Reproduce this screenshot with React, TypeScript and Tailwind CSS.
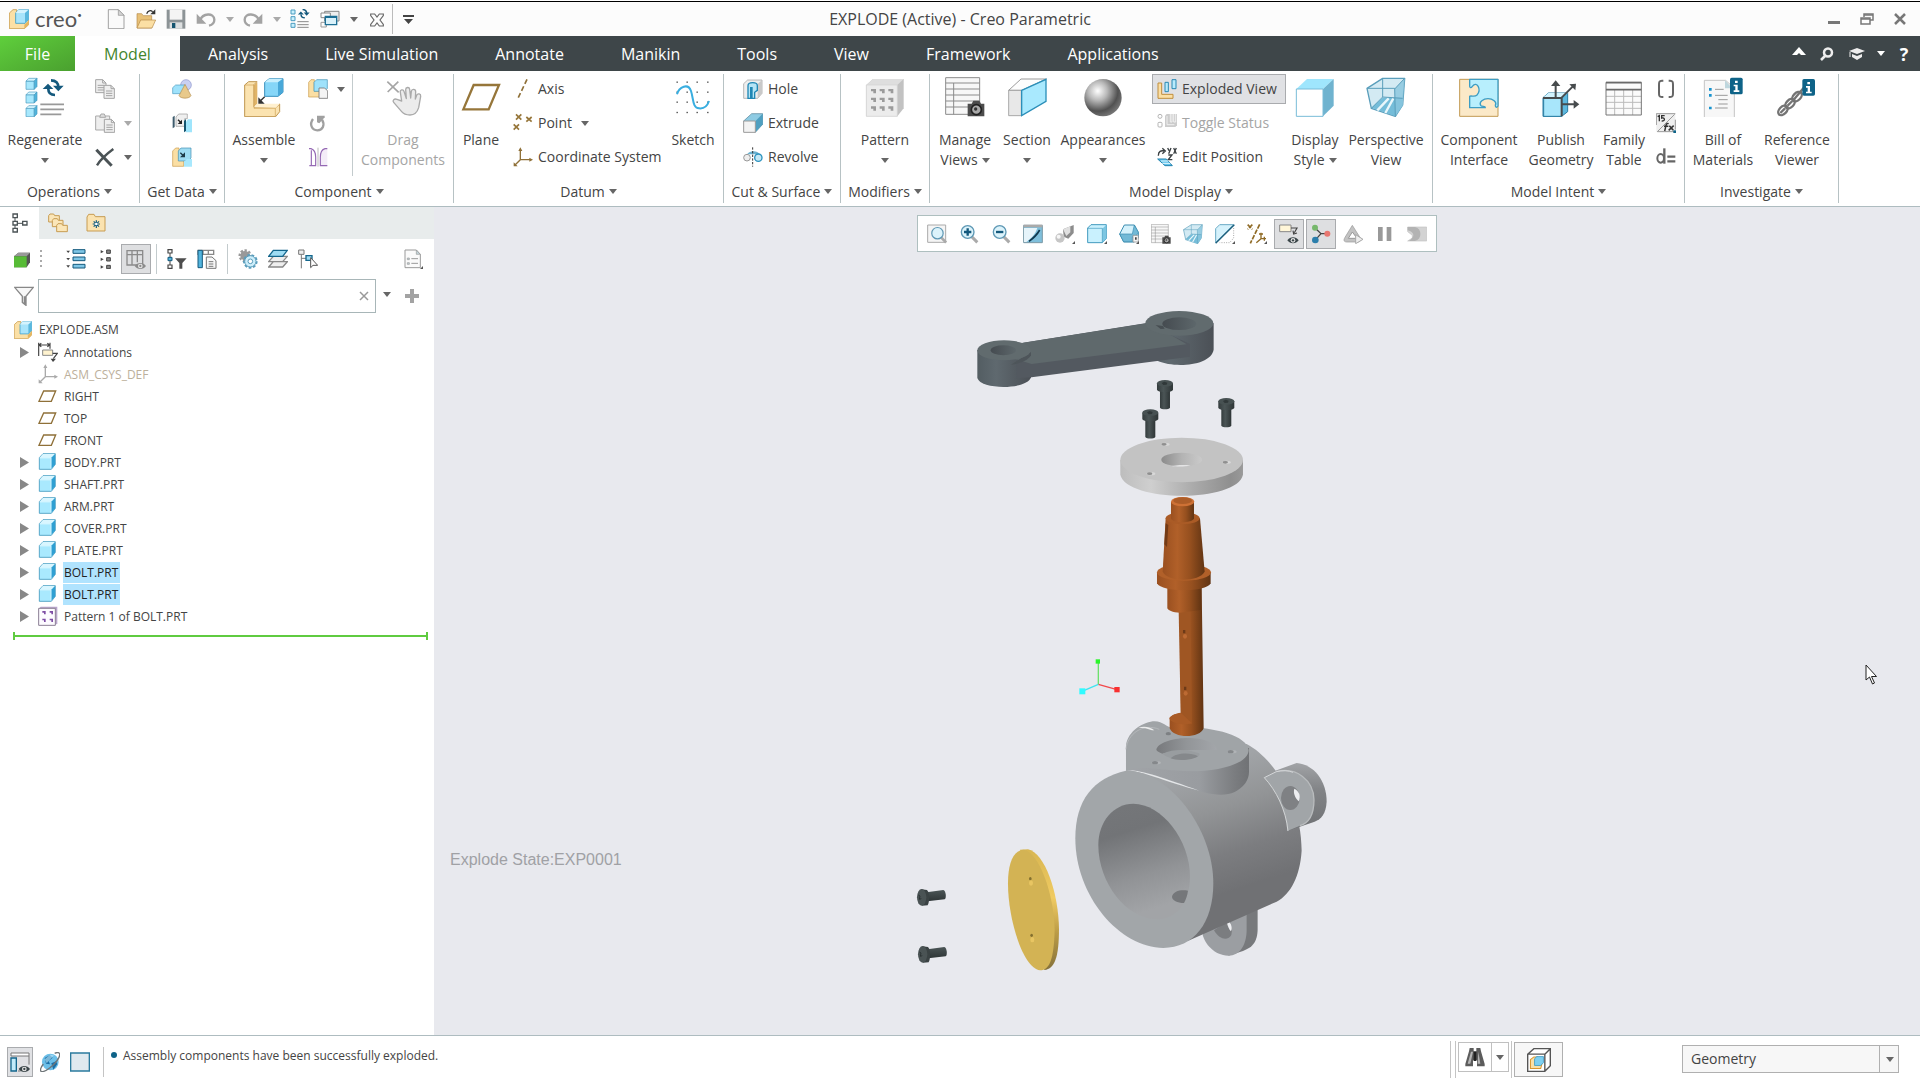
import { useState } from "react"
import type { ReactNode } from "react"
import clsx from "clsx"

// ─── Icon primitives ──────────────────────────────────────

function Small({ children, className }: { children: ReactNode; className?: string }) {
  return <svg viewBox="0 0 60 60" className={clsx("size-5 shrink-0", className)} fill="none" aria-hidden="true">{children}</svg>
}

function Large({ children }: { children: ReactNode }) {
  return <svg viewBox="0 0 120 120" className="size-10 shrink-0" fill="none" aria-hidden="true">{children}</svg>
}

function Caret({ className }: { className?: string }) {
  return (
    <svg viewBox="0 0 8 5" className={clsx("inline-block h-[5px] w-2 shrink-0", className)} aria-hidden="true">
      <path d="M0 0h8L4 5z" fill="currentColor" />
    </svg>
  )
}

interface CubeProps { x: number; y: number; s: number; front?: string; top?: string; side?: string; line?: string }

function Cube({ x, y, s, front = "#a8e8fd", top = "#d5f5ff", side = "#4fb4dc", line = "#4a9cc0" }: CubeProps) {
  const d = s * 0.25
  return (
    <g stroke={line} strokeWidth="2" strokeLinejoin="round">
      <path d={`M${x} ${y + d}h${s - d}v${s - d}h${d - s}z`} fill={front} />
      <path d={`M${x} ${y + d}l${d} ${-d}h${s - d}l${-d} ${d}z`} fill={top} />
      <path d={`M${x + s - d} ${y + d}l${d} ${-d}v${s - d}l${-d} ${d}z`} fill={side} />
    </g>
  )
}

const Swirl = () => (
  <g stroke="#14597d" strokeWidth="8">
    <path d="M100 32C101 18 92 10 78 10" />
    <path d="M70 36C70 48 76 54 90 54" />
    <path d="M84 26h32L100 43zM53 36h32L69 20z" fill="#14597d" stroke="none" />
  </g>
)

const AssemblyLogo = ({ className }: { className?: string }) => (
  <Small className={className}>
    <path d="M1 12L12 2h11l-2 33h24l14-1v13L46 59H1z" fill="#fbe0a6" stroke="#c99b4a" strokeWidth="2.5" strokeLinejoin="round" />
    <path d="M46 59V47l13-12v12z" fill="#e6b660" />
    <path d="M20 12L29 2h30v29l-11 12H20z" fill="#a8e4fb" stroke="#3f9fc8" strokeWidth="2.5" strokeLinejoin="round" />
    <path d="M20 12h28L59 2H29z" fill="#d4f3fe" />
    <path d="M48 12L59 2v29L48 43z" fill="#5ab8de" />
  </Small>
)

const PartIcon = () => (
  <Small>
    <path d="M4 17L15 5h37v32L40 52H4z" fill="#a9e9fe" stroke="#4299be" strokeWidth="2.5" strokeLinejoin="round" />
    <path d="M5 17L15 6h36L40 17z" fill="#d9f6ff" />
    <path d="M40 17L51 6v31L40 51z" fill="#2f9fd2" />
    <path d="M5 18h34v32" stroke="#e2f9ff" strokeWidth="2" />
  </Small>
)

const PlaneIcon = () => (
  <Small>
    <path d="M3 46L17 15h36L40 46z" stroke="#8f7038" strokeWidth="4" />
  </Small>
)

const CsysIcon = ({ color }: { color: string }) => (
  <Small>
    <path d="M22 8v30h30M22 38L6 54" stroke={color} strokeWidth="4" />
    <path d="M16 12l6-11 6 11zM49 32l11 6-11 6zM2 46v12h12z" fill={color} />
  </Small>
)

const ViewsTable = () => (
  <>
    <path d="M2 2h102v110H2z" fill="#f7f7f7" stroke="#8b8b8b" strokeWidth="3" />
    <path d="M2 18h102M2 36h102M2 54h102M2 72h102M2 90h80M26 18v94" stroke="#8b8b8b" strokeWidth="3" />
    <path d="M68 80h12l5-9h18l5 9h10v38H68z" fill="#4c4c4c" />
    <circle cx="94" cy="98" r="15" fill="#a9a9a9" stroke="#222" strokeWidth="5" />
    <circle cx="92" cy="96" r="5" fill="#333" />
  </>
)

const GlassBox = () => (
  <g strokeLinejoin="round">
    <path d="M3 34L50 4h66l-6 80-22 34-72-24z" fill="#d3eaf3" stroke="#5a9ebb" strokeWidth="4" />
    <path d="M16 92l34-30h60v24l-22 32z" fill="#75bdd9" />
    <path d="M34 100l34-36M58 108l24-44" stroke="#eaf7fb" strokeWidth="7" />
    <path d="M86 36L116 4l-6 80-22 34z" fill="#89c6dd" opacity=".8" />
    <path d="M3 34h83l2 84M50 4v56l-34 34M86 36l30-32M50 60l60 4" stroke="#5a9ebb" strokeWidth="3" />
  </g>
)

const Info = ({ x, y }: { x: number; y: number }) => (
  <g transform={`translate(${x} ${y})`}>
    <rect width="38" height="50" rx="5" fill="#0e6388" />
    <path d="M15 9h8v7h-8zM11 21h12v17h5v5H11v-5h5V26h-5z" fill="#fff" />
  </g>
)

const CornerMark = () => <path d="M60 51v9h-9z" fill="#555" />

const Eye = ({ x, y, color = "#3a4548" }: { x: number; y: number; color?: string }) => (
  <g transform={`translate(${x} ${y})`}>
    <path d="M0 9C8-3 26-3 34 9 26 21 8 21 0 9z" fill={color} />
    <circle cx="17" cy="9" r="7" fill="#e6e6e6" />
    <circle cx="17" cy="9" r="3.5" fill={color} />
  </g>
)

// ─── Quick access icons ───────────────────────────────────

const NewIcon = () => (
  <Small>
    <path d="M7 2h30l17 17v40H7z" fill="#fafafa" stroke="#8f8f8f" strokeWidth="2.5" />
    <path d="M37 2v17h17z" fill="#d5d5d5" stroke="#8f8f8f" strokeWidth="2" />
  </Small>
)

const OpenIcon = () => (
  <Small>
    <path d="M3 57V14h14l5 6h25v37z" fill="#e8c178" stroke="#b58a45" strokeWidth="2" />
    <path d="M3 57L14 33h45L48 57z" fill="#fbdfa4" stroke="#b58a45" strokeWidth="2" />
    <path d="M32 14C36 4 44 3 50 8" stroke="#333" strokeWidth="4" />
    <path d="M58 1v15H43z" fill="#333" />
  </Small>
)

const SaveIcon = () => (
  <Small>
    <path d="M2 2h56v57H2z" fill="#8c9396" />
    <path d="M11 2h38v30H11z" fill="#f4f4f4" />
    <path d="M11 40h38v19H11z" fill="#dcdfe0" />
    <path d="M18 42h10v15H18z" fill="#14546f" />
  </Small>
)

const UndoIcon = ({ flip }: { flip?: boolean }) => (
  <Small className={flip ? "-scale-x-100" : undefined}>
    <path d="M12 34C20 12 54 10 55 32c0 10-8 16-16 18" stroke="#a3a3a3" strokeWidth="7" />
    <path d="M2 14v30h29z" fill="#a3a3a3" />
  </Small>
)

const RegenSmall = () => (
  <Small>
    {[3, 23, 43].map(y => <path key={y} d={`M3 ${y}h12v12H3z`} fill="#c9f0fd" stroke="#4a9cc0" strokeWidth="3" />)}
    <g transform="translate(-6 -4) scale(.56)"><Swirl /></g>
    <path d="M22 38h34M22 47h34M22 55h34" stroke="#8a8a8a" strokeWidth="3" />
  </Small>
)

const WindowsIcon = () => (
  <Small>
    <path d="M14 7h43v29H14z" fill="#eee" stroke="#888" strokeWidth="3" />
    <path d="M3 12h28v14H3z" fill="#fff" stroke="#888" strokeWidth="3" />
    <path d="M3 40h16v14H3z" stroke="#999" strokeWidth="3" />
    <path d="M16 22h34v25H16z" fill="#d9f1fa" stroke="#1c6f95" strokeWidth="4" />
    <path d="M16 22h34v5H16z" fill="#1c6f95" />
  </Small>
)

const CloseBoxIcon = () => (
  <Small>
    <path d="M11 15h12l7 9 7-9h12v5L39 33l10 13v5H37l-7-9-7 9H11v-5l10-13-10-13z" stroke="#666" strokeWidth="3.500" />
  </Small>
)

// ─── Ribbon icons ─────────────────────────────────────────

const RegenerateIcon = () => (
  <Large>
    {[4, 45, 86].map(y => <Cube key={y} x={3} y={y} s={33} />)}
    <Swirl />
    <path d="M46 82h71M46 97h71M46 112h63" stroke="#999" strokeWidth="5" />
  </Large>
)

const Page = ({ x, y }: { x: number; y: number }) => (
  <g transform={`translate(${x} ${y})`} stroke="#a3a3a3" strokeWidth="3">
    <path d="M1 1h21l10 10v29H1z" fill="#efefef" />
    <path d="M22 1v10h10M7 18h19M7 25h19M7 32h19" />
  </g>
)

const CopyIcon = () => <Small><Page x={1} y={1} /><Page x={26} y={18} /></Small>

const PasteIcon = () => (
  <Small>
    <path d="M2 9h42v42H2z" fill="#eee" stroke="#a9a9a9" strokeWidth="3" />
    <path d="M14 13h18l-4-10H18z" fill="#ddd" stroke="#a9a9a9" strokeWidth="3" />
    <Page x={27} y={18} />
  </Small>
)

const DeleteIcon = () => (
  <Small>
    <path d="M4 8L50 56" stroke="#4b5356" strokeWidth="9" />
    <path d="M55 6C36 20 16 38 6 55" stroke="#4b5356" strokeWidth="7" />
  </Small>
)

const ShapesIcon = () => (
  <Small>
    <circle cx="42" cy="18" r="16" fill="#c9d0f2" stroke="#8b93cb" strokeWidth="2" />
    <path d="M2 26l9-8h28v22l-5 4H2z" fill="#9fe2fb" stroke="#4a9cc0" strokeWidth="2" />
    <path d="M39 16L57 50C52 60 26 60 21 50z" fill="#e8c98b" stroke="#b59052" strokeWidth="2" />
  </Small>
)

const CopyGeomIcon = () => (
  <Small>
    <path d="M2 12l6-4v34l-6 4z" fill="#3d5b6c" />
    <path d="M12 12L20 3h26v14h-8v23H12z" fill="#efefef" stroke="#999" strokeWidth="2" />
    <path d="M18 20l11 11" stroke="#222" strokeWidth="4" />
    <path d="M30 20v13H17z" fill="#222" />
    <path d="M36 24l6-6v36l-6 4z" fill="#14546f" />
    <path d="M42 26l6-7h12v39H42z" fill="#9fe5fc" />
  </Small>
)

const ShrinkIcon = () => (
  <Small>
    <path d="M2 12L11 3h10v33h14v22H2z" fill="#fbdfa4" stroke="#c99b4a" strokeWidth="2" />
    <path d="M19 12l8-9h30v30l-9 9H19z" fill="#9edcf2" stroke="#3f8fb3" strokeWidth="2" />
    <path d="M25 17l11 11" stroke="#1d3a48" strokeWidth="4" />
    <path d="M39 16v15H24z" fill="#1d3a48" />
    <path d="M36 44l9-8h15v23H36z" fill="#a8e8fd" />
  </Small>
)

const AssembleIcon = () => (
  <Large>
    <path d="M2 24L14 14h25l-9 9v67h66l11-9v23L95 119H2z" fill="#fbe3b0" stroke="#bf9650" strokeWidth="3" strokeLinejoin="round" />
    <path d="M30 24l10-9v65l-10 9z" fill="#e0b468" />
    <path d="M2 24h28v70h64v24M94 94l13-12" stroke="#cfa254" strokeWidth="2" />
    <path d="M30 90l10-10h67L96 92z" fill="#fff0cf" />
    <path d="M62 16L76 5h41v41L102 58H62z" fill="#86d6f8" stroke="#3990bd" strokeWidth="3" />
    <path d="M62 16h40l15-11H76z" fill="#c8effd" />
    <path d="M102 16l15-11v41l-15 12z" fill="#49a8d8" />
    <path d="M62 59L48 73" stroke="#333" strokeWidth="4" />
    <path d="M43 61v19h19z" fill="#333" />
  </Large>
)

const CreateIcon = () => (
  <Small>
    <path d="M2 10L9 2h10v34h16v18H2z" fill="#fbdfa4" stroke="#c99b4a" strokeWidth="2" />
    <path d="M18 10l8-8h32v26l-9 9H18z" fill="#9fe2fb" stroke="#3f8fb3" strokeWidth="2" />
    <path d="M33 27h17l9 9v22H33z" fill="#f4f4f4" stroke="#777" strokeWidth="2.5" />
  </Small>
)

const RepeatIcon = () => (
  <Small>
    <path d="M15 18C3 34 12 52 28 52S52 36 42 20" stroke="#a0a0a0" strokeWidth="7" />
    <path d="M27 8h23v5L34 31l-7-3z" fill="#a0a0a0" />
  </Small>
)

const MirrorIcon = () => (
  <Small>
    <path d="M3 5h6c10 3 14 14 14 26v25H4M10 10v46" stroke="#9569b4" strokeWidth="3.500" />
    <path d="M58 5h-7c-11 3-14 14-14 26v25h21" fill="#f4edf8" stroke="#9569b4" strokeWidth="3.500" />
    <path d="M30 2v57" stroke="#999" strokeWidth="2" />
  </Small>
)

const DragIcon = () => (
  <Large>
    <path d="M13 14l34 32M46 14L14 45" stroke="#a5a5a5" strokeWidth="5" />
    <path d="M56 72l-14-5c-8-3-15 3-10 9l24 28c7 9 16 10 25 10 15 0 22-9 26-22l6-34c1-8-9-10-12-3l-4 11 1-22c0-9-12-9-13-1l-2 20-3-26c-1-8-12-7-12 1l2 27-7-22c-2-7-13-5-11 3z" fill="#ececec" stroke="#aaa" strokeWidth="4" strokeLinejoin="round" />
  </Large>
)

const DatumPlaneIcon = () => (
  <Large><path d="M7 97L38 24h76L83 97z" stroke="#96763a" strokeWidth="7" /></Large>
)

const AxisIcon = () => (
  <Small><path d="M42 1L14 60" stroke="#8f7038" strokeWidth="5" strokeDasharray="15 8" /></Small>
)

const PointIcon = () => (
  <Small>
    <path d="M9 4l16 16M25 4L9 20M40 12l16 14M56 12L40 26M2 34l16 16M18 34L2 50" stroke="#96763a" strokeWidth="5" />
  </Small>
)

const SketchIcon = () => (
  <Large>
    {[15, 45, 75, 106].map(y => [12, 42, 72, 104].map(x => <rect key={`${x}-${y}`} x={x - 1.5} y={y - 1.5} width="4" height="4" fill="#444" />))}
    <path d="M12 52C18 28 46 18 54 42C62 66 58 92 78 94C94 96 104 84 108 72" stroke="#39aee0" strokeWidth="6" />
  </Large>
)

const HoleIcon = () => (
  <Small>
    <path d="M2 14L14 3h43v40L44 58H2z" fill="#eee" stroke="#999" strokeWidth="2" />
    <path d="M44 15L57 3v40L44 58z" fill="#c9c9c9" />
    <path d="M15 58V20c0-12 28-12 28 0v14l-8 6v18h-8V26h-4v32z" fill="#b5e4f5" stroke="#1f87b5" strokeWidth="4" />
  </Small>
)

const ExtrudeIcon = () => (
  <Small>
    <path d="M2 24L26 2h33v32L37 58z" fill="#8ecbe3" stroke="#4b7f95" strokeWidth="2" />
    <path d="M37 25L59 2v32L37 58z" fill="#4f9fc0" />
    <path d="M2 24h35v34H2z" fill="#f3f3f3" stroke="#999" strokeWidth="3" />
  </Small>
)

const RevolveIcon = () => (
  <Small>
    <path d="M12 22c8-12 32-12 38 0z" fill="#6db2d0" />
    <circle cx="12" cy="32" r="10" fill="#eee" stroke="#999" strokeWidth="3" />
    <circle cx="46" cy="32" r="11" fill="#c5e8f5" stroke="#2c93bf" strokeWidth="4" />
    <path d="M29 1v58" stroke="#333" strokeWidth="3" strokeDasharray="7 4" />
  </Small>
)

const PatternIcon = () => (
  <Large>
    <path d="M4 24L24 6h92v88L97 118H4z" fill="#c2c2c2" />
    <path d="M4 24L24 6h92L97 24z" fill="#dedede" />
    <path d="M4 24h93v94H4z" fill="#ececec" stroke="#d2d2d2" strokeWidth="2" />
    {[36, 62, 88].map(y => [18, 44, 70].map(x => <path key={`${x}-${y}`} d={`M${x} ${y}h15v13h-8v-6h-7z`} fill="#9b9b9b" />))}
  </Large>
)

const ManageViewsIcon = () => <Large><ViewsTable /></Large>

const SectionIcon = () => (
  <Large>
    <path d="M5 40L42 6h76L44 40z" fill="#fdfdfd" stroke="#888" strokeWidth="2.5" />
    <path d="M5 40h38v76H5z" fill="#e8e8e8" stroke="#999" strokeWidth="2.5" />
    <path d="M44 40l73-33v66l-73 43z" fill="#a9e9fe" stroke="#2b8fb9" strokeWidth="4" />
  </Large>
)

const AppearancesIcon = () => (
  <Large>
    <defs>
      <radialGradient id="sphere" cx="36%" cy="32%" r="72%">
        <stop offset="0" stopColor="#fff" />
        <stop offset=".35" stopColor="#b9b9b9" />
        <stop offset=".75" stopColor="#515151" />
        <stop offset="1" stopColor="#777" />
      </radialGradient>
    </defs>
    <circle cx="60" cy="62" r="56" fill="url(#sphere)" />
  </Large>
)

const ExplodedIcon = () => (
  <Small>
    <path d="M3 12h11v34h34v12H3z" fill="#fbdfa4" stroke="#c08e3d" strokeWidth="3" />
    <path d="M24 10h10v28H24zM45 2h12v27H45z" fill="#b8ebfc" stroke="#2988b3" strokeWidth="3" />
  </Small>
)

const ToggleStatusIcon = () => (
  <Small>
    <circle cx="9" cy="10" r="6" stroke="#b5b5b5" strokeWidth="3" />
    <rect x="3" y="28" width="12" height="14" rx="3" stroke="#b5b5b5" strokeWidth="3" />
    <path d="M24 8l5-5h31v34l-5 5H24z" fill="#ccc" />
    <path d="M30 9v26h22M40 3v24h5V3M50 3v24h6V3" stroke="#efefef" strokeWidth="3" />
  </Small>
)

const EditPositionIcon = () => (
  <Small>
    <path d="M4 26c0-14 8-16 18-14M16 4l9 8-9 8M32 3l4 8M42 3l-7 17M50 3l8 17M58 3l-8 17M34 24h11L34 38h12" stroke="#3a3f42" strokeWidth="4" />
    <path d="M2 36h26l18 20H24z" fill="#63c4ec" stroke="#2381ad" strokeWidth="3" />
    <path d="M12 42h22M16 49h24" stroke="#e5f7fd" strokeWidth="3" />
  </Small>
)

const DisplayStyleIcon = () => (
  <Large>
    <path d="M4 36L36 6h80L84 36z" fill="#9fe6fd" />
    <path d="M84 36l32-30v80l-32 32z" fill="#6fb3cf" />
    <path d="M4 36h80v82H4z" fill="#fff" stroke="#79bcd8" strokeWidth="3" />
  </Large>
)

const PerspectiveIcon = () => <Large><GlassBox /></Large>

const InterfaceIcon = () => (
  <Large>
    <path d="M2 7h115v111H2z" fill="#fbe9c8" stroke="#c29a52" strokeWidth="3" />
    <path d="M32 7h85v80c-4 6-8 4-8-2 6-10-8-20-22-20s-28 10-22 20c4 6 14 0 14 7H32V58c4-4 14 4 22-4 14-16 0-44-14-26-4 6-8 4-8 0z" fill="#b8effd" stroke="#3d9dc4" strokeWidth="4" strokeLinejoin="round" />
  </Large>
)

const PublishIcon = () => (
  <Large>
    <path d="M6 62L22 48h58v56L62 118H6z" fill="#5db8de" stroke="#2a7da3" strokeWidth="3" />
    <path d="M6 62L22 48h58L62 62z" fill="#d2f3fe" />
    <path d="M8 64h54v54H8z" fill="#a8e6fb" stroke="#2a7da3" strokeWidth="3" />
    <path d="M44 60V18M62 62l36-36M62 82h42M6 63h56v55" stroke="#474b4d" strokeWidth="6" />
    <path d="M30 27L44 10l14 17zM85 22l20-2-2 20zM98 69l17 13-17 13z" fill="#474b4d" />
  </Large>
)

const FamilyIcon = () => (
  <Large>
    <path d="M6 18h106v96H6z" fill="#fbfbfb" />
    <path d="M6 58h106M6 76h106M6 94h106M32 38v76M59 38v76M86 38v76" stroke="#bbb" strokeWidth="3" />
    <path d="M6 16h106v98H6z" stroke="#777" strokeWidth="3" />
    <path d="M6 17h106M6 38h106" stroke="#6a6a6a" strokeWidth="5" />
  </Large>
)

const BracketsIcon = () => (
  <Small>
    <path d="M22 5h-4C9 5 9 10 9 18v23c0 8 0 13 9 13h4M38 5h4c9 0 9 5 9 13v23c0 8 0 13-9 13h-4" stroke="#666" strokeWidth="6" />
  </Small>
)

const ParamsIcon = () => (
  <Small>
    <path d="M1 2h57v54H1z" fill="#efefef" />
    <path d="M58 2H1v34M4 56h50M58 20v30M56 4L4 56" stroke="#999" strokeWidth="3" />
    <path d="M5 11l5-3v17M26 8h-9v7c10-3 12 10 0 9" stroke="#333" strokeWidth="4" />
    <path d="M38 32c-9-4-8 8-12 22M24 40h13M40 38l12 14M53 38L38 52" stroke="#333" strokeWidth="4.500" />
    <path d="M52 52h8v8h-8z" fill="#0e6388" />
  </Small>
)

const RelationsIcon = () => (
  <Small>
    <path d="M25 4v46" stroke="#666" strokeWidth="7" />
    <ellipse cx="14" cy="34" rx="10" ry="13" stroke="#666" strokeWidth="6" />
    <path d="M34 29h24M34 43h24" stroke="#666" strokeWidth="7" />
  </Small>
)

const BomIcon = () => (
  <Large>
    <path d="M4 10h64l26 24v88H4z" fill="#f7f7f7" stroke="#c4c4c4" strokeWidth="3" />
    <path d="M18 33h8v8h-8zM18 51h8v8h-8zM18 89h8v8h-8z" fill="#1793cf" />
    <path d="M36 37h26M36 55h38M46 68h28M46 81h28M36 93h38" stroke="#999" strokeWidth="3" />
    <path d="M66 10v24h22z" fill="#bed6dd" />
    <Info x={81} y={2} />
  </Large>
)

const ViewerIcon = () => (
  <Large>
    <g stroke="#747474" strokeWidth="7">
      <ellipse cx="18" cy="100" rx="17" ry="11" transform="rotate(-45 18 100)" />
      <ellipse cx="39" cy="80" rx="17" ry="11" transform="rotate(-45 39 80)" />
      <ellipse cx="60" cy="59" rx="17" ry="11" transform="rotate(-45 60 59)" />
      <path d="M10 108l14-14M32 86l14-14M52 66l30-36" />
    </g>
    <Info x={76} y={6} />
  </Large>
)

// ─── In-graphics toolbar icons ────────────────────────────

const Lens = ({ sign }: { sign?: string }) => (
  <g>
    <path d="M38 38l17 17" stroke="#aaa" strokeWidth="9" />
    <circle cx="26" cy="24" r="19" fill="#dcf3fb" stroke="#5e98b4" strokeWidth="4" />
    {sign && <path d={sign} stroke="#14597d" strokeWidth="7" />}
  </g>
)

const RefitIcon = () => (
  <Small>
    <path d="M2 3h54v52H2z" fill="#f5f5f5" stroke="#aaa" strokeWidth="3" />
    <g transform="translate(8 6) scale(.9)"><Lens /></g>
  </Small>
)
const ZoomInIcon = () => <Small><Lens sign="M15 24h22M26 13v22" /></Small>
const ZoomOutIcon = () => <Small><Lens sign="M15 24h22" /></Small>

const RepaintIcon = () => (
  <Small>
    <path d="M2 4h56v52H2z" fill="#7fbfdb" stroke="#7b98a5" strokeWidth="3" />
    <path d="M3 12h40C36 32 26 42 10 54H3z" fill="#e6f4fa" />
    <path d="M50 18C40 36 32 42 18 52" stroke="#10394f" strokeWidth="5" />
    <path d="M2 2h56v8H2z" fill="#aaa" />
  </Small>
)

const RenderIcon = () => (
  <Small>
    <path d="M24 16L56 3v24L40 44 26 38z" fill="#8c8c8c" />
    <path d="M24 16L46 7v18L34 36z" fill="#e0e0e0" />
    <circle cx="15" cy="42" r="14" fill="#c6c6c6" />
    <circle cx="11" cy="38" r="6" fill="#f6f6f6" />
    <CornerMark />
  </Small>
)

const ShadeIcon = () => (
  <Small>
    <path d="M2 12L12 2h46v42L46 56H2z" fill="#c9f1fe" stroke="#4299be" strokeWidth="3" />
    <path d="M46 14L58 2v42L46 56z" fill="#7cc6e2" />
    <path d="M2 13h44v43" stroke="#4299be" strokeWidth="2" />
    <CornerMark />
  </Small>
)

const NamedViewIcon = () => (
  <Small>
    <path d="M2 30L16 3h30l12 22v17L46 54H14z" fill="#d4f1fb" stroke="#3a8cb0" strokeWidth="3" />
    <path d="M2 30h38L46 3l12 22-8 14H40v14H14z" fill="#72b9d6" stroke="#3a8cb0" strokeWidth="2" />
    <path d="M42 34h16v20H42z" fill="#f4f4f4" stroke="#888" strokeWidth="2" />
    <path d="M48 40h5v7h-5z" fill="#444" />
    <CornerMark />
  </Small>
)

const CameraTableIcon = () => <Small><g transform="scale(.5)"><ViewsTable /></g></Small>
const GlassSmallIcon = () => <Small><g transform="scale(.5)"><GlassBox /></g></Small>

const ClipIcon = () => (
  <Small>
    <path d="M2 14L14 2h42L2 56z" fill="#d6f2fc" stroke="#69a9c5" strokeWidth="3" />
    <path d="M58 2L2 58" stroke="#1e5f7c" strokeWidth="4" />
    <path d="M56 12v30L44 56H14" stroke="#aaa" strokeWidth="3" strokeDasharray="3 4" />
    <CornerMark />
  </Small>
)

const DatumFilterIcon = () => (
  <Small>
    <path d="M2 2l14 14M16 2L2 16M38 1L10 58" stroke="#8f6a25" strokeWidth="5" strokeDasharray="14 4" />
    <path d="M42 26v18h15M42 44L28 56M36 30h12M52 38v12" stroke="#8f6a25" strokeWidth="4" />
    <CornerMark />
  </Small>
)

const AnnotationShowIcon = () => (
  <Small>
    <path d="M2 3h34v20H2z" fill="#fff6d8" stroke="#888" strokeWidth="3" />
    <path d="M36 12h18L46 26M42 20l2 10 10-3" stroke="#444" strokeWidth="3.500" />
    <Eye x={25} y={40} />
  </Small>
)

const SpinCenterIcon = () => (
  <Small>
    <path d="M12 12l18 17h18M30 29L14 47" stroke="#444" strokeWidth="4" />
    <circle cx="12" cy="11" r="9" fill="#77b86c" />
    <circle cx="49" cy="29" r="9" fill="#e87770" />
    <circle cx="13" cy="48" r="10" fill="#2b7eab" />
  </Small>
)

const SimulateIcon = () => (
  <Small>
    <path d="M28 4l24 38c4 10-4 12-8 12H12C2 54 1 48 6 40z" fill="#c2c2c2" stroke="#999" strokeWidth="2" />
    <path d="M28 24L16 43h26z" fill="#fff" stroke="#999" strokeWidth="3" />
    <path d="M38 32l22 14-22 13z" fill="#eee" stroke="#aaa" strokeWidth="3" />
  </Small>
)

const PauseIcon = () => <Small><path d="M9 9h14v42H9zM35 9h14v42H35z" fill="#999" /></Small>

const ResumeIcon = () => (
  <Small>
    <path d="M2 9h57v42H2l14-9v-8L2 23z" fill="#d3d3d3" stroke="#c2c2c2" strokeWidth="2" />
    <path d="M2 9h22c22 4 22 38 0 42H6c20-14 16-26-4-32z" fill="#b3b3b3" />
  </Small>
)

// ─── Navigator icons ──────────────────────────────────────

const TreeTabIcon = () => (
  <Small>
    <path d="M9 14v32M14 31h28" stroke="#4b5356" strokeWidth="3" />
    <path d="M3 3h13v11H3zM3 25h13v11H3zM3 46h13v11H3zM32 25h13v11H32z" fill="#fff" stroke="#4b5356" strokeWidth="4" />
  </Small>
)

const Folder = ({ x, y }: { x: number; y: number }) => (
  <path transform={`translate(${x} ${y})`} d="M2 8l4-5h11l3 5h14v19H2z" fill="#fbe6b8" stroke="#c79c52" strokeWidth="3" />
)

const FoldersIcon = () => <Small><Folder x={0} y={0} /><Folder x={11} y={14} /><Folder x={24} y={29} /></Small>

const FavoritesIcon = () => (
  <Small>
    <path d="M3 12l5-8h16l4 7h29v43H3z" fill="#fbe3b0" stroke="#c79c52" strokeWidth="3" />
    <path d="M31 22v23M20 33h22M23 25l16 16M39 25L23 41" stroke="#0e5a80" strokeWidth="3.500" />
    <circle cx="31" cy="33" r="4" fill="#fff" />
  </Small>
)

const GreenCubeIcon = () => (
  <Small>
    <path d="M3 22L16 11h35v29L41 55H3z" fill="#555" />
    <path d="M3 22L16 11h35L41 22z" fill="#999" />
    <path d="M3 22h38v33H3z" fill="#57bb36" />
  </Small>
)

const ExpandListIcon = () => (
  <Small>
    {[5, 27, 49].map(y => (
      <g key={y}>
        <path d={`M1 ${y}h11l-5.500 7z`} fill="#444" />
        <path d={`M21 ${y - 3}h36v11H21z`} fill="#7fc6e6" stroke="#14597d" strokeWidth="3" />
      </g>
    ))}
  </Small>
)

const CollapseListIcon = () => (
  <Small>
    {[3, 26, 49].map(y => (
      <g key={y}>
        <path d={`M14 ${y}v10l9-5z`} fill="#444" />
        <path d={`M32 ${y}h11v10H32z`} fill="#888" stroke="#444" strokeWidth="3" />
      </g>
    ))}
  </Small>
)

const ColumnsIcon = () => (
  <Small>
    <path d="M3 5h47v43H3zM3 17h47M18 5v43M34 5v35" stroke="#8b8b8b" strokeWidth="4" />
    <Eye x={26} y={42} color="#8b8b8b" />
  </Small>
)

const TreeFilterIcon = () => (
  <Small>
    <path d="M9 10v38" stroke="#444" strokeWidth="3" />
    <path d="M3 2h12v10H3zM3 48h12v10H3z" fill="#fff" stroke="#444" strokeWidth="3.500" />
    <path d="M3 25h12v10H3z" fill="#52b4dd" stroke="#14597d" strokeWidth="3" />
    <path d="M24 28h35L46 42v17h-9V42z" fill="#4d4d4d" />
  </Small>
)

const TreeColumnsIcon = () => (
  <Small>
    <path d="M3 4h47v12H3zM18 4v12M34 4v12" stroke="#888" strokeWidth="4" />
    <path d="M3 4h13v52H3z" fill="#52b4dd" stroke="#14597d" strokeWidth="3" />
    <path d="M28 24h17l12 11v23H28z" fill="#f7f7f7" stroke="#777" strokeWidth="3" />
    <path d="M35 38h14M35 45h14M35 52h14" stroke="#777" strokeWidth="3" />
  </Small>
)

const GearsIcon = () => (
  <Small>
    <circle cx="21" cy="20" r="14" fill="#999" />
    <circle cx="21" cy="20" r="16" stroke="#999" strokeWidth="7" strokeDasharray="7 5" />
    <circle cx="37" cy="37" r="19" stroke="#5a9dbc" strokeWidth="6" strokeDasharray="8 5" />
    <circle cx="37" cy="37" r="17" fill="#cdeefa" stroke="#5a9dbc" strokeWidth="3" />
    <circle cx="37" cy="37" r="7" fill="#fff" stroke="#5a9dbc" strokeWidth="3" />
  </Small>
)

const LayersIcon = () => (
  <Small>
    <path d="M2 54L16 38h42L44 54zM2 38L16 22h42L44 38z" fill="#eee" stroke="#888" strokeWidth="4" />
    <path d="M2 22L16 4h42L44 22z" fill="#9fdcf3" stroke="#14668c" strokeWidth="4" />
  </Small>
)

const SelectTreeIcon = () => (
  <Small>
    <path d="M10 16v42M10 28h14" stroke="#777" strokeWidth="3" />
    <path d="M2 3h16v13H2z" fill="#eee" stroke="#777" strokeWidth="3" />
    <path d="M24 20h18v14H24z" fill="#9fdcf3" stroke="#14668c" strokeWidth="4" />
    <path d="M38 26v30l7-7 14 0z" fill="#fff" stroke="#555" strokeWidth="3" />
  </Small>
)

const ReportIcon = () => (
  <Small>
    <path d="M6 3h34l12 13v40H6z" fill="#fafafa" stroke="#999" strokeWidth="3" />
    <path d="M40 3v13h12zM13 27h6v5h-6zM13 41h6v5h-6z" fill="#c4d5da" stroke="#999" strokeWidth="2" />
    <path d="M25 29h20M25 43h20" stroke="#999" strokeWidth="3" />
    <CornerMark />
  </Small>
)

const FunnelIcon = () => (
  <Small>
    <path d="M2 4h56L36 31v27l-11-9V31z" fill="#f7f7f7" stroke="#888" strokeWidth="4" />
    <path d="M29 31h7v27l-7-5z" fill="#888" />
  </Small>
)

const AnnotationsIcon = () => (
  <Small>
    <path d="M2 2v40M36 2v18M2 9h32M10 4L3 9l7 5M28 4l7 5-7 5" stroke="#444" strokeWidth="3.500" />
    <path d="M14 24h30v16H14z" fill="#fff3cf" stroke="#888" strokeWidth="3" />
    <path d="M44 34h14L46 50" stroke="#444" strokeWidth="3.500" />
    <path d="M38 50h16l-9 10z" fill="#444" />
  </Small>
)

const TreePatternIcon = () => (
  <Small>
    <path d="M2 8l6-6h50v50l-6 6H2z" fill="#b9a5cc" />
    <path d="M2 7h50v51H2z" fill="#fdfbff" stroke="#8d8296" strokeWidth="3" />
    {[15, 38].map(y => [13, 35].map(x => <path key={`${x}-${y}`} d={`M${x} ${y}h10v10h-5v-5h-5z`} fill="#7e4da5" />))}
  </Small>
)

// ─── Status bar icons ─────────────────────────────────────

const PanelShowIcon = () => (
  <Small>
    <path d="M3 3h54v9H3z" fill="#fff" stroke="#777" strokeWidth="3" />
    <path d="M57 12v26M24 57h8" stroke="#777" strokeWidth="3" />
    <path d="M3 18h16v39H3z" fill="#c2ebfa" stroke="#14668c" strokeWidth="4" />
    <Eye x={26} y={42} />
  </Small>
)

const GlobeIcon = () => (
  <Small>
    <circle cx="31" cy="30" r="25" fill="#6cbfe8" />
    <path d="M14 18l16-9 8 8-12 10 4 10-12-2zM34 34l14-6 4 8-12 17z" fill="#1b6fa6" />
    <path d="M14 22L30 8l12 2-22 24z" fill="#bfe9fa" opacity=".6" />
    <path d="M44 4c8-4 14-3 15 2 2 10-14 30-30 42C16 58 4 62 2 56c-2-5 2-12 8-20" stroke="#6f7679" strokeWidth="4" />
  </Small>
)

const BrowserIcon = () => (
  <Small><path d="M2 3h56v54H2z" fill="#dfe9ef" stroke="#2b7b9e" strokeWidth="4" /></Small>
)

const BinocularsIcon = () => (
  <Small>
    <path d="M14 3h12v10h8V3h12l2 10 11 38v7H36V40H24v18H1v-7l11-38z" fill="#5c5c5c" />
    <path d="M18 14L8 50h8l8-36zM40 14l-2 36h8z" fill="#b5b5b5" />
    <path d="M26 14h8v28h-8z" fill="#222" />
  </Small>
)

const SelectBoxIcon = () => (
  <svg viewBox="0 0 70 70" className="size-6" fill="none" aria-hidden="true">
    <path d="M2 18L20 2h48v50L52 68H2zM2 18h50v50M52 18L68 2" stroke="#555" strokeWidth="4" fill="#fff" />
    <path d="M10 34l10-8h10v18h14l-4 16H10z" fill="#fbdfa4" stroke="#d8952e" strokeWidth="3" />
    <path d="M22 32l6-7h20v18l-8 8H22z" fill="#7dcff0" stroke="#2c8fbd" strokeWidth="2" />
  </svg>
)

// ─── Ribbon building blocks ───────────────────────────────

function Group({ label, className, children }: { label: string; className: string; children: ReactNode }) {
  return (
    <section className={clsx("my-[3px] flex shrink-0 flex-col border-r border-[#b7c2c4]", className)}>
      <div className="flex h-[102px]">{children}</div>
      <button className="flex flex-1 items-center justify-center gap-1 whitespace-nowrap pt-1">
        {label}<Caret className="text-[#666]" />
      </button>
    </section>
  )
}

function Big({ icon, lines, caret, muted, className }: {
  icon: ReactNode; lines: string[]; caret?: boolean; muted?: boolean; className: string
}) {
  return (
    <button className={clsx("flex shrink-0 flex-col items-center whitespace-nowrap pt-[3px] leading-5", muted && "text-[#a5a5a5]", className)}>
      {icon}
      <span className="mt-[13px]">{lines[0]}</span>
      {(lines[1] || caret) && (
        <span className="flex h-5 items-center gap-1">
          {lines[1]}{caret && <Caret className="text-[#666]" />}
        </span>
      )}
    </button>
  )
}

function Row({ icon, label, name, caret, muted, active, wide }: {
  icon: ReactNode; label?: string; name?: string; caret?: boolean; muted?: boolean; active?: boolean; wide?: boolean
}) {
  return (
    <div className="flex h-[34px] shrink-0 items-start">
      <button
        aria-label={name}
        aria-pressed={active}
        className={clsx(
          "flex h-[30px] items-center gap-[5px] whitespace-nowrap border px-1",
          active ? "border-[#a9abae] bg-[#e0e1e4]" : "border-transparent",
          muted && "text-[#a5a5a5]",
          wide && "w-[134px]",
        )}
      >
        {icon}{label}{caret && <Caret className={clsx("ml-1", muted ? "text-[#aaa]" : "text-[#666]")} />}
      </button>
    </div>
  )
}

function Ribbon() {
  return (
    <div className="flex h-[136px] shrink-0 border-b border-[#aebcc0] bg-white text-sm text-[#444]">
      <Group label="Operations" className="w-[140px]">
        <Big icon={<RegenerateIcon />} lines={["Regenerate"]} caret className="w-[90px]" />
        <div>
          <Row icon={<CopyIcon />} name="Copy" />
          <Row icon={<PasteIcon />} name="Paste" caret muted />
          <Row icon={<DeleteIcon />} name="Delete" caret />
        </div>
      </Group>
      <Group label="Get Data" className="w-[85px]">
        <div className="mx-auto">
          <Row icon={<ShapesIcon />} name="User-Defined Feature" />
          <Row icon={<CopyGeomIcon />} name="Copy Geometry" />
          <Row icon={<ShrinkIcon />} name="Shrinkwrap" />
        </div>
      </Group>
      <Group label="Component" className="w-[229px]">
        <Big icon={<AssembleIcon />} lines={["Assemble"]} caret className="w-[78px]" />
        <div className="w-[50px] border-r border-[#c3cbcd]">
          <Row icon={<CreateIcon />} name="Create" caret />
          <Row icon={<RepeatIcon />} name="Repeat" />
          <Row icon={<MirrorIcon />} name="Mirror Component" />
        </div>
        <Big icon={<DragIcon />} lines={["Drag", "Components"]} muted className="w-[100px]" />
      </Group>
      <Group label="Datum" className="w-[270px]">
        <Big icon={<DatumPlaneIcon />} lines={["Plane"]} className="w-[54px]" />
        <div className="w-[157px]">
          <Row icon={<AxisIcon />} label="Axis" />
          <Row icon={<PointIcon />} label="Point" caret />
          <Row icon={<CsysIcon color="#8f7038" />} label="Coordinate System" />
        </div>
        <Big icon={<SketchIcon />} lines={["Sketch"]} className="w-[56px]" />
      </Group>
      <Group label="Cut & Surface" className="w-[117px]">
        <div className="ml-3.5">
          <Row icon={<HoleIcon />} label="Hole" />
          <Row icon={<ExtrudeIcon />} label="Extrude" />
          <Row icon={<RevolveIcon />} label="Revolve" />
        </div>
      </Group>
      <Group label="Modifiers" className="w-[89px]">
        <Big icon={<PatternIcon />} lines={["Pattern"]} caret className="w-full" />
      </Group>
      <Group label="Model Display" className="w-[503px]">
        <Big icon={<ManageViewsIcon />} lines={["Manage", "Views"]} caret className="w-[70px]" />
        <Big icon={<SectionIcon />} lines={["Section"]} caret className="w-[54px]" />
        <Big icon={<AppearancesIcon />} lines={["Appearances"]} caret className="w-[98px]" />
        <div>
          <Row icon={<ExplodedIcon />} label="Exploded View" active wide />
          <Row icon={<ToggleStatusIcon />} label="Toggle Status" muted />
          <Row icon={<EditPositionIcon />} label="Edit Position" />
        </div>
        <Big icon={<DisplayStyleIcon />} lines={["Display", "Style"]} caret className="w-[58px]" />
        <Big icon={<PerspectiveIcon />} lines={["Perspective", "View"]} className="w-[84px]" />
      </Group>
      <Group label="Model Intent" className="w-[252px]">
        <Big icon={<InterfaceIcon />} lines={["Component", "Interface"]} className="w-[92px]" />
        <Big icon={<PublishIcon />} lines={["Publish", "Geometry"]} className="w-[72px]" />
        <Big icon={<FamilyIcon />} lines={["Family", "Table"]} className="w-[54px]" />
        <div>
          <Row icon={<BracketsIcon />} name="Parameters" />
          <Row icon={<ParamsIcon />} name="Switch Dimensions" />
          <Row icon={<RelationsIcon />} name="Relations" />
        </div>
      </Group>
      <Group label="Investigate" className="w-[154px]">
        <Big icon={<BomIcon />} lines={["Bill of", "Materials"]} className="w-[76px]" />
        <Big icon={<ViewerIcon />} lines={["Reference", "Viewer"]} className="w-[72px]" />
      </Group>
    </div>
  )
}

// ─── Title bar and tabs ───────────────────────────────────

function Quick({ name, children }: { name: string; children: ReactNode }) {
  return <button aria-label={name} className="flex h-full w-[30px] shrink-0 items-center justify-center">{children}</button>
}

function QuickCaret({ name, muted }: { name: string; muted?: boolean }) {
  return (
    <button aria-label={name} className={clsx("flex h-full w-[17px] shrink-0 items-center justify-center", muted ? "text-[#aaa]" : "text-[#666]")}>
      <Caret />
    </button>
  )
}

function TitleBar() {
  return (
    <header className="mt-px grid h-[35px] shrink-0 grid-cols-[1fr_auto_1fr] items-center border-t border-black bg-[#fcfcfc] text-[#444]">
      <div className="flex h-full items-center">
        <div className="flex w-[101px] items-center gap-1.5 pl-[9px]">
          <AssemblyLogo />
          <span className="flex items-start font-['Lato'] text-[22px] leading-6 text-[#555]">
            creo<span className="text-[8px] leading-4">•</span>
          </span>
        </div>
        <Quick name="New"><NewIcon /></Quick>
        <Quick name="Open"><OpenIcon /></Quick>
        <Quick name="Save"><SaveIcon /></Quick>
        <Quick name="Undo"><UndoIcon /></Quick>
        <QuickCaret name="Undo list" muted />
        <Quick name="Redo"><UndoIcon flip /></Quick>
        <QuickCaret name="Redo list" muted />
        <Quick name="Regenerate"><RegenSmall /></Quick>
        <Quick name="Windows"><WindowsIcon /></Quick>
        <QuickCaret name="Window list" />
        <Quick name="Close window"><CloseBoxIcon /></Quick>
        <div className="h-[30px] border-l border-[#bbb]" />
        <Quick name="Customize">
          <svg viewBox="0 0 11 9" className="h-[9px] w-[11px]" aria-hidden="true"><path d="M0 0h11v2H0zM1 4h9L5.500 9z" fill="#444" /></svg>
        </Quick>
      </div>
      <h1 className="text-base leading-5">EXPLODE (Active) - Creo Parametric</h1>
      <div className="flex h-full justify-end pr-1">
        <button aria-label="Minimize" className="flex w-[33px] items-center justify-center">
          <svg viewBox="0 0 12 12" className="size-3" aria-hidden="true"><path d="M0 8h12v3H0z" fill="#777" /></svg>
        </button>
        <button aria-label="Restore" className="flex w-[33px] items-center justify-center">
          <svg viewBox="0 0 14 12" className="h-3 w-3.5" fill="none" stroke="#777" strokeWidth="1.500" aria-hidden="true">
            <path d="M4 4V1h9v6h-3M1 5h9v6H1z" /><path d="M1 6h9M4 2h9" />
          </svg>
        </button>
        <button aria-label="Close" className="flex w-[33px] items-center justify-center">
          <svg viewBox="0 0 12 12" className="size-3" aria-hidden="true"><path d="M1 1l10 10M11 1L1 11" stroke="#777" strokeWidth="2.500" /></svg>
        </button>
      </div>
    </header>
  )
}

const TABS = ["Analysis", "Live Simulation", "Annotate", "Manikin", "Tools", "View", "Framework", "Applications"]

function TabBar() {
  return (
    <nav className="flex h-[35px] shrink-0 bg-[#3e4649] text-base text-white">
      <button className="w-[75px] bg-linear-to-br from-[#5fcf3c] to-[#4aa02f]">File</button>
      <button className="w-[105px] bg-white text-[#43852c]">Model</button>
      <div className="flex pl-7">
        {TABS.map(tab => <button key={tab} className="pr-[57px]">{tab}</button>)}
      </div>
      <div className="ml-auto flex items-center pr-[7px]">
        <button aria-label="Minimize ribbon" className="w-7"><svg viewBox="0 0 14 10" className="mx-auto mb-1 h-2.5 w-3.5" aria-hidden="true"><path d="M0 8l7-8 7 8H9L7 6 5 8z" fill="#fff" /></svg></button>
        <button aria-label="Search commands" className="w-7"><svg viewBox="0 0 14 14" className="mx-auto size-3.5" fill="none" stroke="#eee" strokeWidth="2.500" aria-hidden="true"><circle cx="8" cy="5.500" r="4" /><path d="M5 9l-4 4" /></svg></button>
        <button aria-label="Learning" className="w-8"><svg viewBox="0 0 16 12" className="mx-auto h-3 w-4" aria-hidden="true"><path d="M8 0l8 3-8 3-8-3z" fill="#eee" /><path d="M1 4v5" stroke="#eee" /><path d="M3 6l5 2 5-2v3l-5 3-5-3z" fill="#eee" /></svg></button>
        <button aria-label="Learning list" className="flex w-4 justify-center"><Caret /></button>
        <button aria-label="Help" className="w-6 pl-1.5 text-lg font-bold leading-6">?</button>
      </div>
    </nav>
  )
}

// ─── Model tree ───────────────────────────────────────────

interface Node { name: string; icon: ReactNode; expandable?: boolean; selected?: boolean; muted?: boolean }

const NODES: Node[] = [
  { name: "Annotations", icon: <AnnotationsIcon />, expandable: true },
  { name: "ASM_CSYS_DEF", icon: <CsysIcon color="#aaa" />, muted: true },
  { name: "RIGHT", icon: <PlaneIcon /> },
  { name: "TOP", icon: <PlaneIcon /> },
  { name: "FRONT", icon: <PlaneIcon /> },
  { name: "BODY.PRT", icon: <PartIcon />, expandable: true },
  { name: "SHAFT.PRT", icon: <PartIcon />, expandable: true },
  { name: "ARM.PRT", icon: <PartIcon />, expandable: true },
  { name: "COVER.PRT", icon: <PartIcon />, expandable: true },
  { name: "PLATE.PRT", icon: <PartIcon />, expandable: true },
  { name: "BOLT.PRT", icon: <PartIcon />, expandable: true, selected: true },
  { name: "BOLT.PRT", icon: <PartIcon />, expandable: true, selected: true },
  { name: "Pattern 1 of BOLT.PRT", icon: <TreePatternIcon />, expandable: true },
]

function Tool({ name, active, children }: { name: string; active?: boolean; children: ReactNode }) {
  return (
    <button
      aria-label={name}
      className={clsx("flex size-[30px] shrink-0 items-center justify-center border", active ? "border-[#a9abae] bg-[#dedfe1]" : "border-transparent")}
    >
      {children}
    </button>
  )
}

function Navigator() {
  const [query, setQuery] = useState("")

  return (
    <aside className="w-[434px] shrink-0 bg-white text-xs text-[#444]">
      <div className="flex h-8 bg-[#e8ecec]">
        <button aria-label="Model Tree" className="flex w-[39px] items-center justify-center bg-white pl-1"><TreeTabIcon /></button>
        <button aria-label="Folder Browser" className="flex w-[37px] items-center justify-center"><FoldersIcon /></button>
        <button aria-label="Favorites" className="flex w-10 items-center justify-center"><FavoritesIcon /></button>
      </div>

      <div className="flex h-10 items-center pl-2 pr-1.5">
        <Tool name="Model"><GreenCubeIcon /></Tool>
        <svg viewBox="0 0 4 18" className="mx-[1px] h-[18px] w-1" aria-hidden="true">
          {[0, 5, 10, 15].map(y => <rect key={y} x="1" y={y} width="2" height="2" fill="#aaa" />)}
        </svg>
        <div className="ml-[17px] flex items-center">
          <Tool name="Expand all"><ExpandListIcon /></Tool>
          <Tool name="Collapse all"><CollapseListIcon /></Tool>
          <Tool name="Show columns" active><ColumnsIcon /></Tool>
          <div className="mx-[5px] h-[30px] border-l border-[#c3cbcd]" />
          <Tool name="Tree filters"><TreeFilterIcon /></Tool>
          <Tool name="Tree columns"><TreeColumnsIcon /></Tool>
          <div className="mx-[5px] h-[30px] border-l border-[#c3cbcd]" />
          <Tool name="Settings"><GearsIcon /></Tool>
          <Tool name="Layer tree"><LayersIcon /></Tool>
          <Tool name="Select in tree"><SelectTreeIcon /></Tool>
        </div>
        <div className="ml-auto"><Tool name="Report"><ReportIcon /></Tool></div>
      </div>

      <div className="flex h-[34px] items-center pl-3.5">
        <label htmlFor="tree-search" aria-label="Search tree"><FunnelIcon /></label>
        <div className="ml-1 flex h-[34px] w-[338px] items-center border border-[#a8b6b8] pr-1.5">
          <input id="tree-search" value={query} onChange={e => setQuery(e.target.value)} className="h-full min-w-0 flex-1 px-2 outline-none" />
          <button aria-label="Clear search" onClick={() => setQuery("")}>
            <svg viewBox="0 0 10 10" className="size-2.5" aria-hidden="true"><path d="M1 1l8 8M9 1L1 9" stroke="#999" strokeWidth="1.500" /></svg>
          </button>
        </div>
        <button aria-label="Search options" className="ml-[7px] text-[#666]"><Caret className="mb-1" /></button>
        <button aria-label="Add filter" className="ml-3.5">
          <svg viewBox="0 0 14 14" className="size-3.5" aria-hidden="true"><path d="M5 0h4v5h5v4H9v5H5V9H0V5h5z" fill="#a3a3a3" /></svg>
        </button>
      </div>

      <ul className="mt-1.5">
        <li className="flex h-[22px] items-center gap-[7px] pl-3.5"><AssemblyLogo className="size-[18px]" />EXPLODE.ASM</li>
        {NODES.map((node, i) => (
          <li key={i} className="flex h-[22px] items-center pl-5">
            <span className="w-[18px] shrink-0">
              {node.expandable && (
                <button aria-label={`Expand ${node.name}`} className="block">
                  <svg viewBox="0 0 9 11" className="h-[11px] w-[9px]" aria-hidden="true"><path d="M0 0v11l9-5.500z" fill="#888" /></svg>
                </button>
              )}
            </span>
            {node.icon}
            <span className={clsx(
              "ml-[5px] h-[21px] pl-px pr-[2px] leading-[21px]",
              node.selected && "bg-[#b0e3fe] text-[#222]",
              node.muted && "text-[#bcb09c]",
            )}>
              {node.name}
            </span>
          </li>
        ))}
      </ul>
      <div className="ml-[13px] mr-[6px] mt-[5px] flex h-2 items-center border-x-2 border-[#5fcb40]">
        <div className="h-0.5 w-full bg-[#5fcb40]" />
      </div>
    </aside>
  )
}

// ─── Graphics area ────────────────────────────────────────

function UprightBolt({ x, y }: { x: number; y: number }) {
  return (
    <g transform={`translate(${x} ${y})`}>
      <path d="M9 30v53c4 6 26 6 30 0V30z" fill="url(#boltV)" />
      <path d="M0 10v20c6 9 42 9 48 0V10z" fill="url(#boltV)" />
      <ellipse cx="24" cy="10" rx="24" ry="10" fill="#475152" />
      <path d="M14 9l8-4 9 3-2 6-10 1z" fill="#303839" />
    </g>
  )
}

function SideBolt({ x, y }: { x: number; y: number }) {
  return (
    <g transform={`translate(${x} ${y})`}>
      <path d="M30 10L80 3c8 2 10 25 4 28L32 37z" fill="url(#boltH)" />
      <path d="M14 1l17 2c8 8 8 36 2 46l-17 1z" fill="#3a4243" />
      <ellipse cx="15" cy="25" rx="14" ry="25" fill="#4a5354" />
      <path d="M5 18l5 3-2 10 6-2" stroke="#2b3233" strokeWidth="3" fill="none" />
    </g>
  )
}

function Model() {
  return (
    <svg viewBox="434 207 1486 828" className="absolute inset-0 size-full" fill="none" role="img" aria-label="Exploded assembly">
      <defs>
        <linearGradient id="boltV"><stop offset="0" stopColor="#343c3d" /><stop offset=".4" stopColor="#4b5556" /><stop offset="1" stopColor="#2e3536" /></linearGradient>
        <linearGradient id="boltH" x2="0" y2="1"><stop offset="0" stopColor="#4b5556" /><stop offset="1" stopColor="#2e3536" /></linearGradient>
        <linearGradient id="armBoss"><stop offset="0" stopColor="#535d62" /><stop offset=".35" stopColor="#5f696f" /><stop offset="1" stopColor="#4b5056" /></linearGradient>
        <linearGradient id="armHole"><stop offset="0" stopColor="#454b50" /><stop offset="1" stopColor="#5d676b" /></linearGradient>
        <linearGradient id="coverRim"><stop offset="0" stopColor="#bdbdbd" /><stop offset=".25" stopColor="#cfcfcf" /><stop offset=".6" stopColor="#aaa" /><stop offset=".9" stopColor="#8f8f8f" /><stop offset="1" stopColor="#999" /></linearGradient>
        <linearGradient id="coverHole"><stop offset="0" stopColor="#8b8b8b" /><stop offset=".5" stopColor="#b3b3b3" /><stop offset="1" stopColor="#cacaca" /></linearGradient>
        <linearGradient id="copper"><stop offset="0" stopColor="#9a5020" /><stop offset=".35" stopColor="#b16029" /><stop offset=".65" stopColor="#96501f" /><stop offset="1" stopColor="#613413" /></linearGradient>
        <linearGradient id="shell" gradientUnits="userSpaceOnUse" x1="470" y1="170" x2="590" y2="530"><stop offset="0" stopColor="#a1a4a7" /><stop offset=".35" stopColor="#929496" /><stop offset=".7" stopColor="#7c7d80" /><stop offset="1" stopColor="#707174" /></linearGradient>
        <linearGradient id="bore" x2=".25" y2="1"><stop offset="0" stopColor="#75777a" /><stop offset=".3" stopColor="#727477" /><stop offset=".7" stopColor="#919396" /><stop offset="1" stopColor="#a2a4a7" /></linearGradient>
        <linearGradient id="neck"><stop offset="0" stopColor="#a1a4a8" /><stop offset=".6" stopColor="#999ca0" /><stop offset=".88" stopColor="#7b7d80" /><stop offset="1" stopColor="#707275" /></linearGradient>
        <linearGradient id="seat"><stop offset="0" stopColor="#77797c" /><stop offset=".5" stopColor="#929598" /><stop offset="1" stopColor="#a3a6aa" /></linearGradient>
        <linearGradient id="lug" x2="0" y2="1"><stop offset="0" stopColor="#a1a3a6" /><stop offset=".4" stopColor="#828487" /><stop offset="1" stopColor="#6f7174" /></linearGradient>
        <linearGradient id="brassRim" x2="0" y2="1"><stop offset="0" stopColor="#d8b652" /><stop offset=".4" stopColor="#f0cb62" /><stop offset=".7" stopColor="#b99a45" /><stop offset="1" stopColor="#85713a" /></linearGradient>
      </defs>

      {/* Arm and its bolts, cover */}
      <g transform="translate(960 290) scale(.3333)">
        <path d="M556 100v75c10 66 195 66 205 4V100z" fill="url(#armBoss)" />
        <path d="M52 180v84c10 36 150 36 161-2v-80z" fill="url(#armBoss)" />
        <path d="M190 158L556 100 690 162V200L215 262 170 265V225z" fill="#535960" />
        <path d="M185 159L570 98l110 65L215 222l-60-18z" fill="#5f696c" />
        <path d="M213 186v10c-10 18-40 26-60 28z" fill="#4e555a" />
        <ellipse cx="658" cy="100" rx="102" ry="37" fill="#616b6e" />
        <ellipse cx="658" cy="101" rx="51" ry="19" fill="url(#armHole)" />
        <path d="M587 105l22 3 5 8-12 1z" fill="#474e52" />
        <ellipse cx="132" cy="181" rx="80" ry="30" fill="#616b6e" />
        <ellipse cx="130" cy="181" rx="38" ry="15" fill="url(#armHole)" />
        <UprightBolt x={591} y={270} />
        <UprightBolt x={775} y={324} />
        <UprightBolt x={547} y={358} />
        <path d="M481 510v44c20 84 350 84 368 0V510z" fill="url(#coverRim)" />
        <ellipse cx="665" cy="510" rx="184" ry="67" fill="#c3c3c3" />
        <ellipse cx="665" cy="509" rx="61" ry="21" fill="url(#coverHole)" />
        <path d="M634 528c18-3 42-3 58-1-18 3-42 3-58 1z" fill="#f3f3f5" />
        {[[616, 463], [800, 517], [573, 551]].map(([x, y]) => (
          <g key={x}>
            <ellipse cx={x} cy={y} rx="13" ry="5" fill="#d8d8d8" />
            <ellipse cx={x - 4} cy={y} rx="8" ry="4" fill="#8f8f8f" />
          </g>
        ))}
      </g>

      {/* Body */}
      <g transform="translate(1050 710) scale(.3333)">
        <path d="M590 605l33-10v60c0 44-18 58-44 68l-44 14z" fill="#77797c" />
        <path d="M458 674l20-30 112-45v60c0 44-20 78-55 78-44-2-70-36-77-63z" fill="#9b9ea2" />
        <path d="M492 661l46-30c8 14 10 28 6 44-8 16-34 18-52-14z" fill="#7b7d80" />
        <path d="M531 640l8-4c7 10 8 20 4 28-5-4-9-14-12-24z" fill="#eeeff2" />
        <path d="M590 102c80 42 165 170 165 320-5 76-32 130-75 153L415 692 160 220l80-40 90-80z" fill="url(#shell)" />
        <path d="M228 118v64c70 4 140 40 230 64 60 16 100 10 128-26 8-12 12-24 11-40v-66z" fill="url(#neck)" />
        <path d="M228 108c4-46 56-74 86-74 26 0 34 18 54 20 90-10 222 16 228 66 0 40-84 64-176 64-100-4-140-18-192-2z" fill="#a0a4a7" />
        <path d="M228 118c4-46 50-80 100-60" stroke="#b4b7ba" strokeWidth="3" />
        <path d="M265 53c18-5 36-2 48 8l-7 0c-13-6-26-8-41-8z" fill="#eceded" />
        <path d="M319 118c8-24 60-34 94-34 46 0 86 14 88 35-40 4-100-4-164 12-12-4-18-8-18-13z" fill="url(#seat)" />
        <path d="M337 131c40-16 78-12 110-1 10 8-24 22-48 20-24 0-50-8-62-19z" fill="#999da0" />
        <path d="M362 145c16-18 62-18 82-6-12 10-58 16-82 6z" fill="#85888b" />
        {[[319, 158], [546, 125]].map(([x, y]) => (
          <g key={x}>
            <ellipse cx={x} cy={y} rx="14" ry="5" fill="#b0b3b6" />
            <ellipse cx={x - 4} cy={y} rx="9" ry="5" fill="#85888b" />
          </g>
        ))}
        <ellipse cx="355" cy="71" rx="8" ry="5" fill="#7d8083" />
        <path d="M232 180c50 2 110 24 216 62-100-26-150-52-216-62z" fill="#e4e6e8" />
        <path d="M76 385C76 270 130 204 228 182 350 178 490 350 490 520c0 120-60 194-150 194C210 714 76 560 76 385z" fill="#a2a6a9" />
        <path d="M145 405c0-70 45-124 105-124 85 0 170 109 170 219 0 75-40 128-98 128-92 0-177-108-177-223z" fill="url(#bore)" />
        <path d="M366 560c4-18 28-22 48-18-2 14-6 26-12 37-20 0-36-8-36-19z" fill="#75777a" />
        <path d="M676 182l64-23c52 4 90 54 90 116-2 36-16 52-36 60l-80 27z" fill="url(#lug)" />
        <path d="M643 203l36-18c60-16 112 26 113 84 0 44-16 70-42 78l-38 16c-4-64-34-122-69-160z" fill="#a1a5a8" />
        <path d="M679 185c60-16 112 26 113 84 0 44-16 70-42 78" stroke="#b9bcbe" strokeWidth="4" />
        <path d="M643 203l36-18c18-4 36-4 50 2" stroke="#d5d7d9" strokeWidth="3" />
        <path d="M643 203c35 38 65 96 71 160" stroke="#dcdee0" strokeWidth="2.500" />
        <ellipse cx="721" cy="264" rx="28" ry="36" fill="#7f8184" />
        <path d="M733 236c16 8 20 24 13 38-10-10-17-24-13-38z" fill="#edeef1" />
      </g>

      {/* Shaft */}
      <g transform="translate(1050 480) scale(.3333)">
        <path d="M388 320h67l6 425c-10 30-90 32-102 0v-32c6-8 20-12 34-14z" fill="url(#copper)" />
        <path d="M386 390h36l4 342-34-32z" fill="#9f5623" />
        <path d="M358 716c6-12 20-16 34-18l34 32c-20 6-56 4-68-14z" fill="#a95b26" />
        <path d="M352 310h102v80l-64 8c-22 0-38-8-38-14z" fill="url(#copper)" />
        <path d="M321 278v32c14 28 148 28 161 0v-32z" fill="url(#copper)" />
        <ellipse cx="402" cy="277" rx="81" ry="25" fill="#b16029" />
        <path d="M347 115l-9 160c14 32 110 32 126 0l-14-160z" fill="url(#copper)" />
        <ellipse cx="398" cy="115" rx="51" ry="18" fill="#aa5b26" />
        <path d="M363 66v50c8 14 60 14 69 0V66z" fill="url(#copper)" />
        <ellipse cx="398" cy="65" rx="35" ry="14" fill="#ce7135" />
        <ellipse cx="398" cy="62" rx="28" ry="10" fill="#ad5d28" />
        <path d="M347 130l8 5-4 66-8-8z" fill="#733b16" />
        <path d="M399 450h7v10h-7zM402 620h7v10h-7z" fill="#6d3a18" />
        <ellipse cx="405" cy="469" rx="6" ry="7" fill="#bc6a33" />
        <ellipse cx="407" cy="640" rx="6" ry="7" fill="#bc6a33" />
        <path d="M145 545v68" stroke="#6ce06c" strokeWidth="4" />
        <path d="M145 613l56 16" stroke="#f2484a" strokeWidth="4" />
        <path d="M145 613l-49 21" stroke="#3fe5f0" strokeWidth="4" />
        <path d="M137 538h13v13h-13z" fill="#2bf52b" />
        <path d="M193 621h16v16h-16z" fill="#f83030" />
        <path d="M88 625h18v18H88z" fill="#30fbff" />
      </g>

      {/* Plate and side bolts */}
      <g transform="translate(890 820) scale(.3333)">
        <path d="M390 89l24-1c50 10 92 130 93 240 0 80-12 120-44 122z" fill="url(#brassRim)" />
        <path d="M354 190c0-60 16-100 48-101 44 8 90 130 92 240-2 84-14 122-44 122-50-6-96-150-96-261z" fill="#d3b354" />
        {[[421, 176], [425, 346]].map(([x, y]) => (
          <g key={y}>
            <ellipse cx={x} cy={y} rx="4" ry="5" fill="#84702f" />
            <ellipse cx={x + 2} cy={y + 13} rx="6" ry="8" fill="#e8c562" />
          </g>
        ))}
        <SideBolt x={80} y={207} />
        <SideBolt x={83} y={378} />
      </g>

      {/* Pointer */}
      <path d="M1866 665v15l3.500-3 3 7 2-1-3-6.500h5z" fill="#fff" stroke="#222" strokeWidth="1" />
    </svg>
  )
}

function Viewport() {
  return (
    <main className="relative min-w-0 flex-1 bg-[#e8e9ee]">
      <Model />
      <div className="relative flex justify-center pt-2">
        <div role="toolbar" aria-label="Graphics" className="flex h-[37px] items-center gap-0.5 border border-[#aebfbf] bg-white px-1">
          <Tool name="Refit"><RefitIcon /></Tool>
          <Tool name="Zoom in"><ZoomInIcon /></Tool>
          <Tool name="Zoom out"><ZoomOutIcon /></Tool>
          <Tool name="Repaint"><RepaintIcon /></Tool>
          <Tool name="Rendering options"><RenderIcon /></Tool>
          <Tool name="Display style"><ShadeIcon /></Tool>
          <Tool name="Saved orientations"><NamedViewIcon /></Tool>
          <Tool name="View manager"><CameraTableIcon /></Tool>
          <Tool name="Perspective view"><GlassSmallIcon /></Tool>
          <Tool name="Clipping"><ClipIcon /></Tool>
          <Tool name="Datum display filters"><DatumFilterIcon /></Tool>
          <Tool name="Annotation display" active><AnnotationShowIcon /></Tool>
          <Tool name="Spin center" active><SpinCenterIcon /></Tool>
          <Tool name="Simulate"><SimulateIcon /></Tool>
          <Tool name="Pause"><PauseIcon /></Tool>
          <Tool name="Resume"><ResumeIcon /></Tool>
        </div>
      </div>
      <p className="absolute bottom-[163px] left-4 font-['Liberation_Sans'] text-base leading-6 text-[#a0a1a5]">Explode State:EXP0001</p>
    </main>
  )
}

// ─── Status bar ───────────────────────────────────────────

function StatusBar() {
  return (
    <footer className="flex h-[43px] shrink-0 items-start border-t border-[#aebcc0] bg-white text-xs text-[#444]">
      <div className="mt-[11px] flex h-[30px] items-center border-r border-[#c4c4c4] pl-[7px] pr-[13px]">
        <button aria-label="Show navigator" className="flex h-[30px] w-[26px] items-center justify-center border border-[#a9abae] bg-[#e0e1e4]"><PanelShowIcon /></button>
        <button aria-label="Show browser" className="flex w-[34px] justify-center"><GlobeIcon /></button>
        <button aria-label="Full screen" className="ml-[3px]"><BrowserIcon /></button>
      </div>
      <p className="ml-[7px] mt-[10px] flex items-center gap-1.5 leading-5">
        <span className="mb-0.5 size-1.5 rounded-full bg-[#0e6388]" />
        Assembly components have been successfully exploded.
      </p>
      <div className="ml-auto flex items-start">
        <div className="mt-[5px] h-[38px] w-1.5 border-x border-[#c4c4c4]" />
        <div className="ml-0.5 mt-1.5 flex h-[30px] border border-[#c0c0c0]">
          <button aria-label="Find" className="flex w-[33px] items-center justify-center border-r border-[#c0c0c0]"><BinocularsIcon /></button>
          <button aria-label="Find options" className="flex w-4 items-center justify-center text-[#666]"><Caret /></button>
        </div>
        <div className="ml-0.5 mt-[5px] h-[38px] border-l border-[#c4c4c4]" />
        <button aria-label="Selection box" className="ml-0.5 mt-1.5 flex h-[35px] w-[49px] items-center justify-center border border-[#b0b0b0] bg-[#f7f7f7]"><SelectBoxIcon /></button>
        <div className="relative ml-[119px] mr-[21px] mt-[9px] flex h-7 w-[217px]">
          <select aria-label="Selection filter" className="w-full appearance-none border border-[#b0b0b0] bg-[#f7f7f7] px-2 text-sm">
            <option>Geometry</option>
          </select>
          <span className="pointer-events-none absolute inset-y-0 right-0 flex w-5 items-center justify-center border-l border-[#b0b0b0] text-[#666]"><Caret /></span>
        </div>
      </div>
    </footer>
  )
}

export default function App() {
  return (
    <div className="flex h-dvh min-h-[700px] flex-col overflow-hidden bg-white font-['Open_Sans','Noto_Sans',sans-serif]">
      <TitleBar />
      <TabBar />
      <Ribbon />
      <div className="flex min-h-0 flex-1">
        <Navigator />
        <Viewport />
      </div>
      <StatusBar />
    </div>
  )
}
